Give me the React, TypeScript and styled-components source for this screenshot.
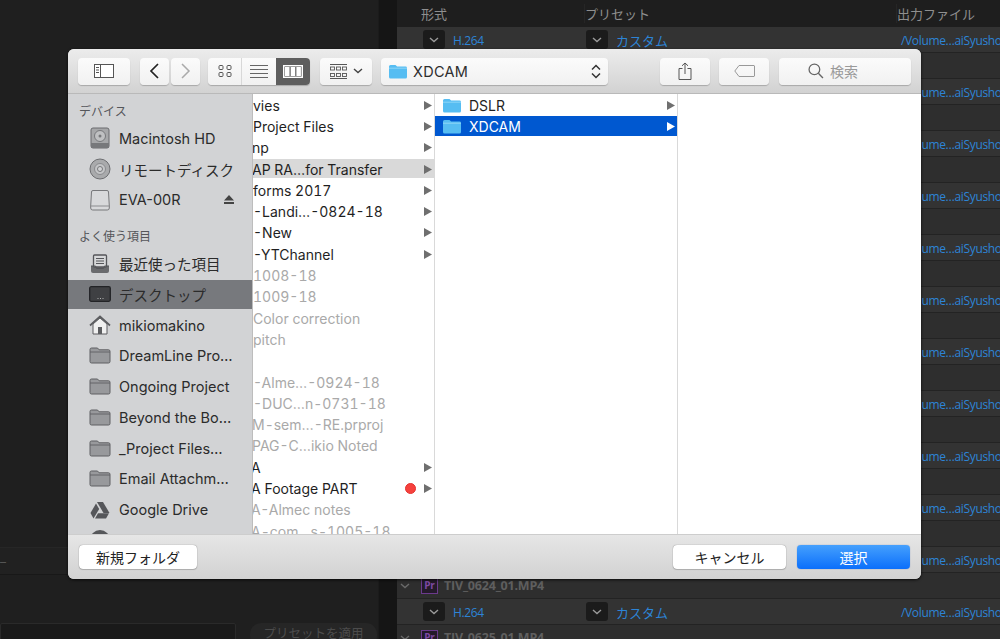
import React from "react";
import styled, { createGlobalStyle } from "styled-components";

const UI = `"Inter", "Noto Sans CJK JP", sans-serif`;
const ADOBE = `"Open Sans", "Noto Sans CJK JP", sans-serif`;

const Global = createGlobalStyle`
  html, body { margin: 0; padding: 0; background: #1f1f1f; }
  * { box-sizing: border-box; }
`;

const Page = styled.div`
  position: relative;
  width: 1000px;
  height: 639px;
  overflow: hidden;
  display: flex;
  background: #1f1f1f;
  font-family: ${UI};
`;

const LeftPane = styled.div`
  width: 378px;
  height: 639px;
  display: flex;
  flex-direction: column;
  justify-content: flex-end;
  background: #1f1f1f;
`;
const LeftStrip = styled.div`
  height: 28px;
  border-top: 1px solid #262626;
  border-bottom: 1px solid #181818;
  margin-bottom: 48px;
  display: flex;
  align-items: center;
  color: #555;
  font-size: 12px;
  background: #212121;
`;
const LeftFooter = styled.div`
  height: 16px;
  display: flex;
  gap: 14px;
`;
const DarkInput = styled.div`
  width: 236px;
  height: 20px;
  background: #1a1a1a;
  border: 1px solid #2a2a2a;
  border-radius: 2px;
`;
const ApplyButton = styled.div`
  width: 127px;
  height: 24px;
  border-radius: 11px;
  background: #262626;
  color: #4c4c4c;
  font-size: 12.5px;
  text-align: center;
  line-height: 22px;
`;
const Gutter = styled.div`
  width: 19px;
  background: #151515;
  border-left: 1px solid #1b1b1b;
`;
const RightPane = styled.div`
  flex: 1;
  display: flex;
  flex-direction: column;
  font-family: ${ADOBE};
`;
const HeaderRow = styled.div`
  height: 27px;
  flex: none;
  display: grid;
  grid-template-columns: 187px 312px 1fr;
  align-items: center;
  background: #1e1e1e;
  color: #8f8f8f;
  font-size: 13px;
`;
const HeaderCell = styled.div<{ $first?: boolean }>`
  padding-left: 0;
  border-left: 1px solid ${(p) => (p.$first ? "transparent" : "#262626")};
  margin-left: ${(p) => (p.$first ? "23px" : "0")};
`;
const PresetRow = styled.div`
  height: 26px;
  flex: none;
  display: grid;
  grid-template-columns: 189px 314px 1fr;
  align-items: center;
  background: #333333;
  border-bottom: 1px solid #232323;
  color: #2d84d6;
  font-size: 12px;
  letter-spacing: -0.35px;
`;
const GroupRow = styled.div`
  height: 26px;
  flex: none;
  display: flex;
  align-items: center;
  padding-left: 3px;
  background: #2e2e2e;
  border-bottom: 1px solid #232323;
  color: #5f5f5f;
  font-size: 12.5px;
  font-weight: 700;
  letter-spacing: -0.2px;
`;
const Cell = styled.div<{ $pad: number }>`
  display: flex;
  align-items: center;
  padding-left: ${(p) => p.$pad}px;
  gap: 8px;
  white-space: nowrap;
  overflow: hidden;
`;
const CellText = styled.span`
  padding-top: 2px;
`;
const PresetName = styled.span`
  font-size: 13px;
  letter-spacing: 0;
  padding-top: 1px;
`;
const SelectBtn = styled.span`
  width: 22px;
  height: 19px;
  flex: none;
  border-radius: 3px;
  background: #1b1b1b;
  display: flex;
  align-items: center;
  justify-content: center;
`;
const PrBadge = styled.span`
  width: 17px;
  height: 16px;
  margin: 0 6px 0 11px;
  flex: none;
  border: 1px solid #6b3a8c;
  background: #241a2a;
  color: #7f4aa4;
  font-size: 10px;
  font-weight: 700;
  line-height: 13px;
  text-align: center;
`;

/* dialog */
const Dialog = styled.div`
  position: absolute;
  left: 68px;
  top: 49px;
  width: 853px;
  height: 530px;
  border-radius: 6px;
  overflow: hidden;
  display: flex;
  flex-direction: column;
  box-shadow: 0 1px 3px rgba(0, 0, 0, 0.75);
  background: #dcdcdc;
`;
const Toolbar = styled.div`
  height: 45px;
  flex: none;
  display: flex;
  align-items: center;
  padding: 0 10px 0 10px;
  background: linear-gradient(#ececec, #d2d2d2);
  border-bottom: 1px solid #b9b9b9;
`;
const ToolBtn = styled.div<{ $w: number; $ml?: number }>`
  width: ${(p) => p.$w}px;
  height: 27px;
  margin-left: ${(p) => p.$ml ?? 0}px;
  flex: none;
  display: flex;
  align-items: center;
  justify-content: center;
  gap: 6px;
  background: linear-gradient(#fbfbfb, #f1f1f1);
  border-radius: 4px;
  box-shadow: 0 1px 1px rgba(0, 0, 0, 0.22);
  color: #444;
`;
const Segments = styled.div`
  width: 102px;
  height: 27px;
  margin-left: 8px;
  flex: none;
  display: flex;
  border-radius: 4px;
  overflow: hidden;
  background: linear-gradient(#fbfbfb, #f1f1f1);
  box-shadow: 0 1px 1px rgba(0, 0, 0, 0.22);
`;
const Segment = styled.div<{ $on?: boolean }>`
  flex: 1;
  display: flex;
  align-items: center;
  justify-content: center;
  border-left: 1px solid ${(p) => (p.$on ? "#5e5e5e" : "#d8d8d8")};
  background: ${(p) => (p.$on ? "#5e5e5e" : "transparent")};
  &:first-child { border-left: none; }
`;
const PathPopup = styled(ToolBtn)`
  justify-content: flex-start;
  padding: 0 7px;
  gap: 5px;
  font-size: 14.5px;
  color: #2e2e2e;
`;
const SearchBtn = styled(ToolBtn)`
  padding-right: 24px;
`;
const PathName = styled.span`
  flex: 1;
  letter-spacing: 0.3px;
`;
const SearchLabel = styled.span`
  font-size: 14px;
  color: #9a9a9a;
`;
const Body = styled.div`
  flex: 1;
  min-height: 0;
  display: flex;
`;
const Sidebar = styled.div`
  width: 185px;
  flex: none;
  overflow: hidden;
  padding-top: 4px;
  background: #d2d3d5;
  border-right: 1px solid #bdbdbd;
`;
const SectionTitle = styled.div<{ $mt?: number }>`
  height: 25px;
  margin-top: ${(p) => p.$mt ?? 0}px;
  padding: 0 0 0 11px;
  line-height: 27px;
  font-size: 12px;
  color: #55565a;
`;
const SideRow = styled.div<{ $on?: boolean }>`
  height: 30.75px;
  display: flex;
  align-items: center;
  padding-left: 21px;
  gap: 8px;
  font-size: 14.5px;
  color: #2b2b2b;
  white-space: nowrap;
  background-clip: padding-box;
  border-top: 1px solid transparent;
  border-bottom: 1px solid transparent;
  background-color: ${(p) => (p.$on ? "#77797d" : "transparent")};
`;
const IconWrap = styled.span`
  width: 22px;
  height: 22px;
  flex: none;
  display: flex;
  align-items: center;
  justify-content: center;
`;
const SideText = styled.span`
  flex: 1;
`;
const Eject = styled.span`
  margin-right: 18px;
  width: 10px;
  display: flex;
`;
const Column = styled.div<{ $w: number; $last?: boolean }>`
  width: ${(p) => p.$w}px;
  flex: ${(p) => (p.$last ? 1 : "none")};
  overflow: hidden;
  background: #fff;
  border-right: ${(p) => (p.$last ? "none" : "1px solid #d9d9d9")};
`;
const FileRow = styled.div<{ $state?: "grey" | "blue"; $dim?: boolean }>`
  height: 21.3px;
  display: flex;
  align-items: center;
  padding: 1px 2px 0 0;
  font-size: 14px;
  font-variant-numeric: tabular-nums;
  white-space: nowrap;
  overflow: hidden;
  background-clip: padding-box;
  border-top: 1px solid transparent;
  border-bottom: 1px solid transparent;
  color: ${(p) => (p.$state === "blue" ? "#fff" : p.$dim ? "#a9a9a9" : "#1f1f1f")};
  background-color: ${(p) => (p.$state === "blue" ? "#0058d0" : p.$state === "grey" ? "#d9d9d9" : "transparent")};
`;
const FileName = styled.span<{ $shift?: number }>`
  flex: 1;
  margin-left: ${(p) => p.$shift ?? 0}px;
`;
const FolderSlot = styled.span`
  width: 20px;
  margin: 0 7px 0 7px;
  display: flex;
`;
const RedTag = styled.span`
  width: 11px;
  height: 11px;
  margin-right: 8px;
  border-radius: 50%;
  background: #f6413d;
  border: 1px solid #e5312e;
`;
const Footer = styled.div`
  height: 45px;
  flex: none;
  display: flex;
  align-items: center;
  padding: 0 11px;
  background: linear-gradient(#e6e6e6, #d2d2d2);
  border-top: 1px solid #cdcdcd;
`;
const FootBtn = styled.div<{ $primary?: boolean; $w: number; $ml?: string }>`
  width: ${(p) => p.$w}px;
  height: 24px;
  margin-left: ${(p) => p.$ml ?? "0"};
  display: flex;
  align-items: center;
  justify-content: center;
  border-radius: 4px;
  font-size: 14px;
  color: ${(p) => (p.$primary ? "#fff" : "#222")};
  background: ${(p) => (p.$primary ? "linear-gradient(#45a0fd, #0b6ffb)" : "#fff")};
  box-shadow: ${(p) => (p.$primary ? "0 0 1px rgba(0,60,160,.6)" : "0 0 1px rgba(0,0,0,.55), 0 1px 1px rgba(0,0,0,.15)")};
`;

/* icons */
const Chevron = ({ c = "#9a9a9a" }: { c?: string }) => (
  <svg width="10" height="6" viewBox="0 0 10 6"><path d="M1 1l4 3.5L9 1" fill="none" stroke={c} strokeWidth="1.4" /></svg>
);
const Arrow = ({ c = "#6f6f6f" }: { c?: string }) => (
  <svg width="8" height="9" viewBox="0 0 8 9" style={{ flex: "none" }}><path d="M0 0l8 4.5L0 9z" fill={c} /></svg>
);
const BlueFolder = ({ w = 20, h = 15 }: { w?: number; h?: number }) => (
  <svg width={w} height={h} viewBox="0 0 20 15">
    <path d="M1 2.5A1.5 1.5 0 0 1 2.5 1h5l1.6 1.6h8.4A1.5 1.5 0 0 1 19 4v9a1.5 1.5 0 0 1-1.5 1.5h-15A1.5 1.5 0 0 1 1 13z" fill="#56bdf2" />
    <path d="M1 4.2h18" stroke="#8fd6f7" strokeWidth="1" />
  </svg>
);
const GreyFolder = () => (
  <svg width="22" height="17" viewBox="0 0 22 17">
    <path d="M1 2.5A1.5 1.5 0 0 1 2.5 1h6l1.6 1.8h9.4A1.5 1.5 0 0 1 21 4.3v10.2a1.5 1.5 0 0 1-1.5 1.5h-17A1.5 1.5 0 0 1 1 14.500z" fill="#98999c" stroke="#5e5f62" strokeWidth="1" />
    <path d="M1 5h20" stroke="#5e5f62" strokeWidth="0.9" />
  </svg>
);
const HdIcon = () => (
  <svg width="20" height="22" viewBox="0 0 20 22">
    <rect x="1" y="1" width="18" height="20" rx="2" fill="#a6a7a9" stroke="#6a6b6e" />
    <circle cx="10" cy="9" r="5.500" fill="#bfc0c2" stroke="#77787b" />
    <circle cx="10" cy="9" r="1.500" fill="#77787b" />
    <rect x="1" y="16" width="18" height="5" fill="#77787b" />
  </svg>
);
const CdIcon = () => (
  <svg width="22" height="22" viewBox="0 0 22 22">
    <circle cx="11" cy="11" r="10" fill="#a9aaac" stroke="#6d6e71" />
    <circle cx="11" cy="11" r="5.500" fill="#c4c5c7" stroke="#8a8b8e" />
    <circle cx="11" cy="11" r="2.500" fill="#d2d3d5" stroke="#77787b" />
  </svg>
);
const DriveIcon = () => (
  <svg width="20" height="22" viewBox="0 0 20 22">
    <path d="M3 1.500h14a1.500 1.500 0 0 1 1.500 1.500L19.300 17v2a2 2 0 0 1-2 2H2.700a2 2 0 0 1-2-2v-2L1.500 3A1.500 1.500 0 0 1 3 1.500z" fill="#d8d9db" stroke="#77787b" />
    <path d="M1 17h18" stroke="#8b8c8f" />
  </svg>
);
const RecentIcon = () => (
  <svg width="20" height="20" viewBox="0 0 20 20">
    <path d="M1 12v5a2 2 0 0 0 2 2h14a2 2 0 0 0 2-2v-5z" fill="#6a6b6e" />
    <rect x="3.500" y="1" width="13" height="12" rx="1" fill="#d6d7d9" stroke="#55565a" strokeWidth="1.300" />
    <path d="M6 4.500h8M6 7h8M6 9.500h8" stroke="#55565a" strokeWidth="1.100" />
    <path d="M1 12h4.500l1 2.500h7l1-2.500H19" fill="none" stroke="#55565a" />
  </svg>
);
const DesktopIcon = () => (
  <svg width="22" height="16" viewBox="0 0 22 16">
    <rect x="0.700" y="0.700" width="20.600" height="14.600" rx="1.500" fill="#3f4043" stroke="#222326" strokeWidth="1.300" />
    <path d="M8.500 12.500h1M11 12.500h1M13.500 12.500h1" stroke="#b0b0b0" strokeWidth="1.200" />
  </svg>
);
const HomeIcon = () => (
  <svg width="22" height="20" viewBox="0 0 22 20">
    <path d="M4 9v10h14V9L11 3z" fill="#f0f0f0" stroke="#5c5d60" />
    <path d="M1 10.500L11 1.500l10 9" fill="none" stroke="#5c5d60" strokeWidth="1.700" />
    <rect x="9" y="12" width="4" height="7" fill="#5c5d60" />
  </svg>
);
const DriveLogo = () => (
  <svg width="20" height="18" viewBox="0 0 20 18">
    <path d="M7 1h6l6.500 11h-6z" fill="#55565a" />
    <path d="M6 2.500L9.200 8 3.500 17.500.5 12z" fill="#55565a" />
    <path d="M5 17.500l3-5.300h11l-3 5.300z" fill="#55565a" />
  </svg>
);
const DarkDisc = () => (
  <svg width="22" height="22" viewBox="0 0 22 22"><circle cx="11" cy="11" r="10" fill="#56575a" /></svg>
);
const EjectIcon = () => (
  <svg width="10" height="9" viewBox="0 0 10 9"><path d="M5 0l5 5.500H0z M0 7h10v2H0z" fill="#444" /></svg>
);
const SidebarGlyph = () => (
  <svg width="20" height="14" viewBox="0 0 20 14">
    <rect x="0.500" y="0.500" width="19" height="13" fill="#fff" stroke="#555" />
    <path d="M6.500 0.500v13M2 3.500h3M2 6h3M2 8.500h3" stroke="#555" />
  </svg>
);
const Back = ({ c }: { c: string }) => (
  <svg width="11" height="16" viewBox="0 0 11 16"><path d="M9 1L2 8l7 7" fill="none" stroke={c} strokeWidth="1.700" /></svg>
);
const Forward = ({ c }: { c: string }) => (
  <svg width="11" height="16" viewBox="0 0 11 16"><path d="M2 1l7 7-7 7" fill="none" stroke={c} strokeWidth="1.500" /></svg>
);
const IconGrid = () => (
  <svg width="14" height="12" viewBox="0 0 14 12">
    <g fill="none" stroke="#555"><rect x="1" y="0.500" width="4" height="4" rx="1" /><rect x="9" y="0.500" width="4" height="4" rx="1" /><rect x="1" y="7.500" width="4" height="4" rx="1" /><rect x="9" y="7.500" width="4" height="4" rx="1" /></g>
  </svg>
);
const IconList = () => (
  <svg width="18" height="13" viewBox="0 0 18 13"><path d="M0 .5h18M0 4.500h18M0 8.500h18M0 12.500h18" stroke="#666" /></svg>
);
const IconColumns = () => (
  <svg width="20" height="13" viewBox="0 0 20 13">
    <rect x="0.700" y="0.700" width="18.600" height="11.600" fill="none" stroke="#fff" strokeWidth="1.400" />
    <rect x="2" y="2" width="4.500" height="9" fill="#fff" /><rect x="7.700" y="2" width="4.500" height="9" fill="#fff" /><rect x="13.400" y="2" width="4.500" height="9" fill="#fff" />
  </svg>
);
const ArrangeGlyph = () => (
  <svg width="17" height="15" viewBox="0 0 17 15">
    <path d="M0 .5h17" stroke="#555" />
    <g fill="none" stroke="#555" strokeWidth="0.900">
      <rect x="0.500" y="3" width="4" height="3" /><rect x="6.500" y="3" width="4" height="3" /><rect x="12.500" y="3" width="4" height="3" />
      <rect x="0.500" y="9.500" width="4" height="3" /><rect x="6.500" y="9.500" width="4" height="3" /><rect x="12.500" y="9.500" width="4" height="3" />
    </g>
    <path d="M0 14.500h17" stroke="#555" />
  </svg>
);
const UpDown = () => (
  <svg width="10" height="15" viewBox="0 0 10 15" style={{ flex: "none" }}><path d="M1 5.500L5 1.500l4 4M1 9.500l4 4 4-4" fill="none" stroke="#333" strokeWidth="1.500" /></svg>
);
const ShareGlyph = () => (
  <svg width="14" height="18" viewBox="0 0 14 18">
    <path d="M4.500 6.500H1v11h12v-11H9.500" fill="none" stroke="#555" />
    <path d="M7 12V1M4 3.800L7 1l3 2.800" fill="none" stroke="#555" />
  </svg>
);
const TagGlyph = () => (
  <svg width="21" height="12" viewBox="0 0 21 12"><path d="M5 .5h15a.7.7 0 0 1 .5.5v10a.7.7 0 0 1-.5.5H5L.8 6z" fill="none" stroke="#999" /></svg>
);
const SearchGlyph = () => (
  <svg width="16" height="16" viewBox="0 0 15 15"><circle cx="6" cy="6" r="5" fill="none" stroke="#666" strokeWidth="1.200" /><path d="M9.700 9.700L14 14" stroke="#666" strokeWidth="1.300" /></svg>
);

type F = { t: string; shift?: number; dim?: boolean; arrow?: boolean; grey?: boolean; red?: boolean };
const files: F[] = [
  { t: "vies", arrow: true },
  { t: "Project Files", arrow: true },
  { t: "np", shift: -1, arrow: true },
  { t: "AP RA…for Transfer", shift: -1, arrow: true, grey: true },
  { t: "forms 2017", arrow: true },
  { t: "-Landi…-0824-18", arrow: true },
  { t: "-New", arrow: true },
  { t: "-YTChannel", arrow: true },
  { t: "1008-18", dim: true },
  { t: "1009-18", dim: true },
  { t: "Color correction", dim: true },
  { t: "pitch", dim: true },
  { t: "" },
  { t: "-Alme…-0924-18", dim: true },
  { t: "-DUC…n-0731-18", dim: true },
  { t: "M-sem…-RE.prproj", shift: -1, dim: true },
  { t: "PAG-C…ikio Noted", shift: -1, dim: true },
  { t: "A", shift: -2, arrow: true },
  { t: "A Footage PART", shift: -2, arrow: true, red: true },
  { t: "A-Almec notes", shift: -2, dim: true },
  { t: "A-com…s-1005-18", shift: -2, dim: true },
];

const favourites: [string, React.ReactNode, boolean?][] = [
  ["最近使った項目", <RecentIcon />],
  ["デスクトップ", <DesktopIcon />, true],
  ["mikiomakino", <HomeIcon />],
  ["DreamLine Pro…", <GreyFolder />],
  ["Ongoing Project", <GreyFolder />],
  ["Beyond the Bo…", <GreyFolder />],
  ["_Project Files…", <GreyFolder />],
  ["Email Attachm…", <GreyFolder />],
  ["Google Drive", <DriveLogo />],
  ["Dropbox", <DarkDisc />],
];

const rowIds = Array.from({ length: 12 }, (_, i) => i);

export default function App() {
  return (
    <Page>
      <Global />
      <LeftPane>
        <LeftStrip>–</LeftStrip>
        <LeftFooter>
          <DarkInput />
          <ApplyButton>プリセットを適用</ApplyButton>
        </LeftFooter>
      </LeftPane>
      <Gutter />
      <RightPane>
        <HeaderRow>
          <HeaderCell $first>形式</HeaderCell>
          <HeaderCell>プリセット</HeaderCell>
          <HeaderCell>出力ファイル</HeaderCell>
        </HeaderRow>
        {rowIds.map((i) => (
          <React.Fragment key={i}>
            <PresetRow>
              <Cell $pad={26}><SelectBtn><Chevron /></SelectBtn><CellText>H.264</CellText></Cell>
              <Cell $pad={0}><SelectBtn><Chevron /></SelectBtn><PresetName>カスタム</PresetName></Cell>
              <Cell $pad={1}><CellText>/Volume…aiSyusho</CellText></Cell>
            </PresetRow>
            <GroupRow>
              <Chevron c="#6a6a6a" />
              <PrBadge>Pr</PrBadge>
              {`TIV_06${14 + i}_01.MP4`}
            </GroupRow>
          </React.Fragment>
        ))}
      </RightPane>

      <Dialog>
        <Toolbar>
          <ToolBtn $w={52}><SidebarGlyph /></ToolBtn>
          <ToolBtn $w={29} $ml={10}><Back c="#222" /></ToolBtn>
          <ToolBtn $w={29} $ml={2}><Forward c="#aaa" /></ToolBtn>
          <Segments>
            <Segment><IconGrid /></Segment>
            <Segment><IconList /></Segment>
            <Segment $on><IconColumns /></Segment>
          </Segments>
          <ToolBtn $w={52} $ml={10}><ArrangeGlyph /><Chevron c="#444" /></ToolBtn>
          <PathPopup $w={227} $ml={9}>
            <BlueFolder /><PathName>XDCAM</PathName><UpDown />
          </PathPopup>
          <ToolBtn $w={50} $ml={52}><ShareGlyph /></ToolBtn>
          <ToolBtn $w={50} $ml={9}><TagGlyph /></ToolBtn>
          <SearchBtn $w={132} $ml={10}><SearchGlyph /><SearchLabel>検索</SearchLabel></SearchBtn>
        </Toolbar>
        <Body>
          <Sidebar>
            <SectionTitle>デバイス</SectionTitle>
            <SideRow><IconWrap><HdIcon /></IconWrap><SideText>Macintosh HD</SideText></SideRow>
            <SideRow><IconWrap><CdIcon /></IconWrap><SideText>リモートディスク</SideText></SideRow>
            <SideRow>
              <IconWrap><DriveIcon /></IconWrap><SideText>EVA-00R</SideText>
              <Eject><EjectIcon /></Eject>
            </SideRow>
            <SectionTitle $mt={8}>よく使う項目</SectionTitle>
            {favourites.map(([label, icon, on]) => (
              <SideRow key={label} $on={on}>
                <IconWrap>{icon}</IconWrap><SideText>{label}</SideText>
              </SideRow>
            ))}
          </Sidebar>
          <Column $w={182}>
            {files.map((f, i) => (
              <FileRow key={i} $dim={f.dim} $state={f.grey ? "grey" : undefined}>
                <FileName $shift={f.shift}>{f.t}</FileName>
                {f.red && <RedTag />}
                {f.arrow && <Arrow />}
              </FileRow>
            ))}
          </Column>
          <Column $w={243}>
            <FileRow>
              <FolderSlot><BlueFolder /></FolderSlot><FileName>DSLR</FileName><Arrow />
            </FileRow>
            <FileRow $state="blue">
              <FolderSlot><BlueFolder /></FolderSlot><FileName>XDCAM</FileName><Arrow c="#fff" />
            </FileRow>
          </Column>
          <Column $w={243} $last />
        </Body>
        <Footer>
          <FootBtn $w={118}>新規フォルダ</FootBtn>
          <FootBtn $w={113} $ml="auto">キャンセル</FootBtn>
          <FootBtn $w={113} $ml="11px" $primary>選択</FootBtn>
        </Footer>
      </Dialog>
    </Page>
  );
}
